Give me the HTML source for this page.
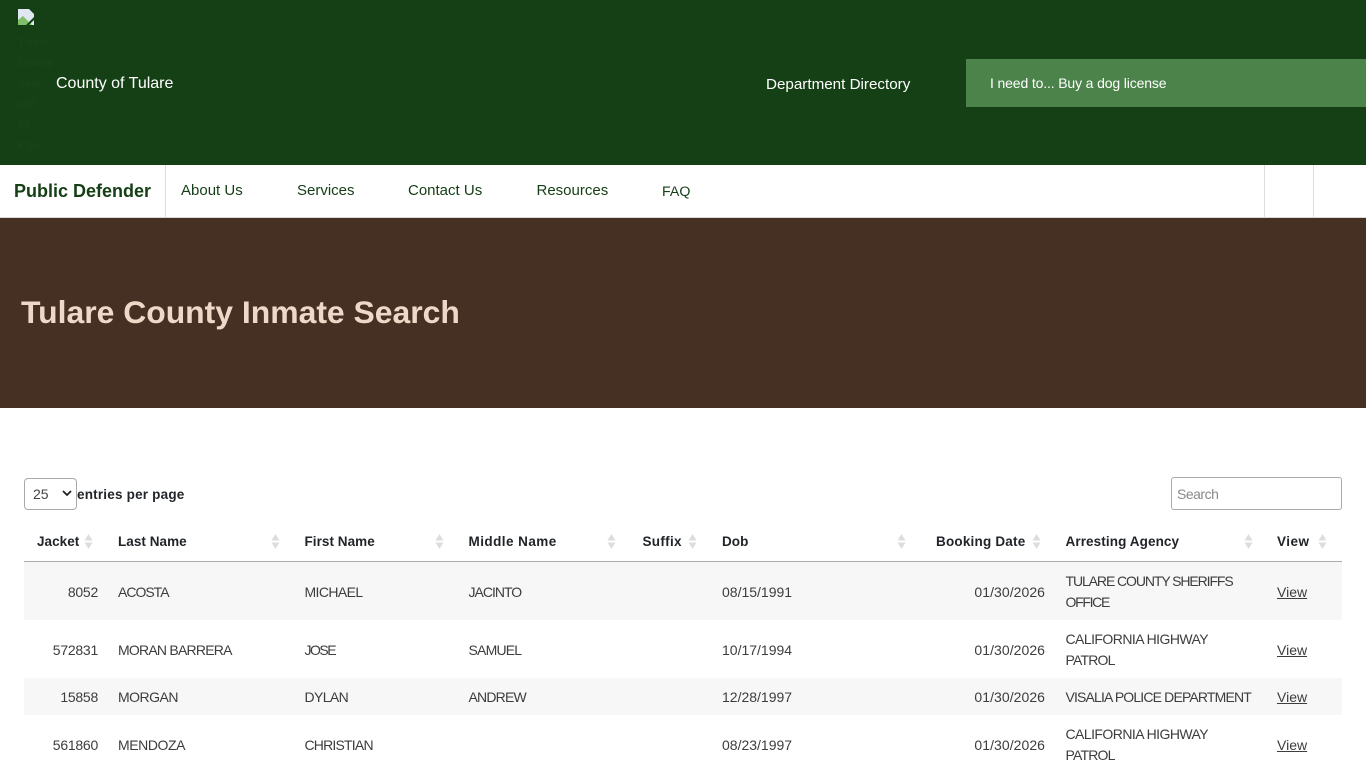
<!DOCTYPE html>
<html lang="en">
<head>
<meta charset="utf-8">
<title>Tulare County Inmate Search</title>
<style>
html,body{margin:0;padding:0;background:#fff}
body{position:relative;width:1366px;height:768px;overflow:hidden;font-family:"Liberation Sans",sans-serif;color:#333}
.a{position:absolute}
.t{position:absolute;white-space:nowrap;line-height:20px;font-size:14px;color:#3d3d3d}
.r{text-align:right;letter-spacing:.05px}
.j{text-align:right;letter-spacing:-.25px}
.h{font-weight:bold;color:#212529;font-size:13.5px;top:532px;letter-spacing:.05px}
.n{color:#143d16;font-size:15px;top:181px}
.f{font-size:11px;color:#1a451a}
.s{position:absolute;top:534px;width:9px;height:15px}
a{color:#3d3d3d}
</style>
</head>
<body>
<div class="a" style="left:0;top:0;width:1366px;height:165px;background:#154015"></div>
<svg class="a" style="left:18px;top:9px" width="16" height="16" viewBox="0 0 16 16"><path d="M0 0H11L16 5V16H0Z" fill="#dfe8f2"/><path d="M0 16V11L5 7L10 12L14 16Z" fill="#7fbf6a"/><path d="M8 16L16 8V11L11 16Z" fill="#154015"/></svg>
<div class="t f" style="left:18px;top:33px">Tulare</div>
<div class="t f" style="left:18px;top:53px">County</div>
<div class="t f" style="left:18px;top:74px">Seal</div>
<div class="t f" style="left:18px;top:94px">and</div>
<div class="t f" style="left:18px;top:115px">for</div>
<div class="t f" style="left:18px;top:136px">logo</div>
<div class="t" style="left:56px;top:74px;font-size:16px;color:#fff">County of Tulare</div>
<div class="t" style="left:766px;top:75px;font-size:15.2px;color:#fff">Department Directory</div>
<div class="a" style="left:966px;top:59px;width:400px;height:48px;background:#4b834b"></div>
<div class="t" style="left:990px;top:73px;font-size:14px;color:#fff;letter-spacing:-.14px">I need to... Buy a dog license</div>

<div class="a" style="left:0;top:165px;width:1366px;height:52px;background:#fff"></div>
<div class="a" style="left:0;top:217px;width:1366px;height:1px;background:#d8d8d8"></div>
<div class="a" style="left:165px;top:165px;width:1px;height:52px;background:#ddd"></div>
<div class="a" style="left:1264px;top:165px;width:1px;height:52px;background:#ddd"></div>
<div class="a" style="left:1313px;top:165px;width:1px;height:52px;background:#ddd"></div>
<div class="t" style="left:14px;top:181px;font-size:18px;font-weight:bold;color:#154015">Public Defender</div>
<div class="t n" style="left:181px">About Us</div>
<div class="t n" style="left:297px">Services</div>
<div class="t n" style="left:408px">Contact Us</div>
<div class="t n" style="left:536.5px">Resources</div>
<div class="t n" style="left:662px;top:182px;font-size:14.2px">FAQ</div>

<div class="a" style="left:0;top:218px;width:1366px;height:190px;background:#453023"></div>
<div class="t" style="left:21px;top:292px;line-height:40px;font-size:31.9px;font-weight:bold;color:#eed9c9">Tulare County Inmate Search</div>

<div class="a" style="left:24px;top:478px;width:51px;height:30px;border:1px solid #aaa;border-radius:4px;background:#fff"></div>
<div class="t" style="left:33px;top:484px;font-size:14px;color:#444">25</div>
<svg class="a" style="left:62px;top:490px" width="10" height="6" viewBox="0 0 10 6"><path d="M1 1L5 5L9 1" fill="none" stroke="#222" stroke-width="1.8"/></svg>
<div class="t" style="left:77px;top:485px;font-size:13.5px;font-weight:bold;color:#212529;letter-spacing:.2px">entries per page</div>
<div class="a" style="left:1171px;top:477px;width:169px;height:31px;border:1px solid #aaa;border-radius:3px;background:#fff"></div>
<div class="t" style="left:1177px;top:484px;font-size:14px;color:#8a8a8a;letter-spacing:-.5px">Search</div>

<div class="t h" style="left:37px">Jacket</div>
<div class="t h" style="left:118px">Last Name</div>
<div class="t h" style="left:304.5px">First Name</div>
<div class="t h" style="left:468.5px;letter-spacing:.45px">Middle Name</div>
<div class="t h" style="left:642.5px;letter-spacing:.3px">Suffix</div>
<div class="t h" style="left:722px">Dob</div>
<div class="t h" style="left:936px;letter-spacing:.2px">Booking Date</div>
<div class="t h" style="left:1065.5px;letter-spacing:.1px">Arresting Agency</div>
<div class="t h" style="left:1277px;letter-spacing:.5px">View</div>
<svg width="0" height="0" style="position:absolute"><defs><g id="sort"><path d="M4.5 0L8.5 6.5H.5Z" fill="#ddd"/><path d="M.5 8.5H8.5L4.5 15Z" fill="#ddd"/></g></defs></svg>
<svg class="s" style="left:84px"><use href="#sort"/></svg>
<svg class="s" style="left:271px"><use href="#sort"/></svg>
<svg class="s" style="left:435px"><use href="#sort"/></svg>
<svg class="s" style="left:607px"><use href="#sort"/></svg>
<svg class="s" style="left:688px"><use href="#sort"/></svg>
<svg class="s" style="left:897px"><use href="#sort"/></svg>
<svg class="s" style="left:1032px"><use href="#sort"/></svg>
<svg class="s" style="left:1244px"><use href="#sort"/></svg>
<svg class="s" style="left:1318px"><use href="#sort"/></svg>
<div class="a" style="left:24px;top:561px;width:1318px;height:1px;background:#aaa"></div>
<div class="a" style="left:24px;top:562px;width:1318px;height:58px;background:#f7f7f7"></div>
<div class="a" style="left:24px;top:678px;width:1318px;height:37px;background:#f7f7f7"></div>

<div class="t j" style="right:1268px;top:582px">8052</div>
<div class="t" style="left:118px;top:582px;letter-spacing:-1px">ACOSTA</div>
<div class="t" style="left:304.5px;top:582px;letter-spacing:-.6px">MICHAEL</div>
<div class="t" style="left:468.5px;top:582px;letter-spacing:-1px">JACINTO</div>
<div class="t" style="left:722px;top:582px">08/15/1991</div>
<div class="t r" style="right:321px;top:582px">01/30/2026</div>
<div class="t" style="left:1065.5px;top:571px;letter-spacing:-1.09px">TULARE COUNTY SHERIFFS</div>
<div class="t" style="left:1065.5px;top:592px;letter-spacing:-1.3px">OFFICE</div>
<div class="t" style="left:1277px;top:582px"><a href="#">View</a></div>

<div class="t j" style="right:1268px;top:640px">572831</div>
<div class="t" style="left:118px;top:640px;letter-spacing:-.77px">MORAN BARRERA</div>
<div class="t" style="left:304.5px;top:640px;letter-spacing:-1.5px">JOSE</div>
<div class="t" style="left:468.5px;top:640px;letter-spacing:-.8px">SAMUEL</div>
<div class="t" style="left:722px;top:640px">10/17/1994</div>
<div class="t r" style="right:321px;top:640px">01/30/2026</div>
<div class="t" style="left:1065.5px;top:629px;letter-spacing:-.55px">CALIFORNIA HIGHWAY</div>
<div class="t" style="left:1065.5px;top:650px;letter-spacing:-.8px">PATROL</div>
<div class="t" style="left:1277px;top:640px"><a href="#">View</a></div>

<div class="t j" style="right:1268px;top:687px">15858</div>
<div class="t" style="left:118px;top:687px;letter-spacing:-.5px">MORGAN</div>
<div class="t" style="left:304.5px;top:687px;letter-spacing:-.6px">DYLAN</div>
<div class="t" style="left:468.5px;top:687px;letter-spacing:-.8px">ANDREW</div>
<div class="t" style="left:722px;top:687px">12/28/1997</div>
<div class="t r" style="right:321px;top:687px">01/30/2026</div>
<div class="t" style="left:1065.5px;top:687px;letter-spacing:-.84px">VISALIA POLICE DEPARTMENT</div>
<div class="t" style="left:1277px;top:687px"><a href="#">View</a></div>

<div class="t j" style="right:1268px;top:735px">561860</div>
<div class="t" style="left:118px;top:735px;letter-spacing:-.43px">MENDOZA</div>
<div class="t" style="left:304.5px;top:735px;letter-spacing:-.8px">CHRISTIAN</div>
<div class="t" style="left:722px;top:735px">08/23/1997</div>
<div class="t r" style="right:321px;top:735px">01/30/2026</div>
<div class="t" style="left:1065.5px;top:724px;letter-spacing:-.55px">CALIFORNIA HIGHWAY</div>
<div class="t" style="left:1065.5px;top:745px;letter-spacing:-.8px">PATROL</div>
<div class="t" style="left:1277px;top:735px"><a href="#">View</a></div>
</body>
</html>
